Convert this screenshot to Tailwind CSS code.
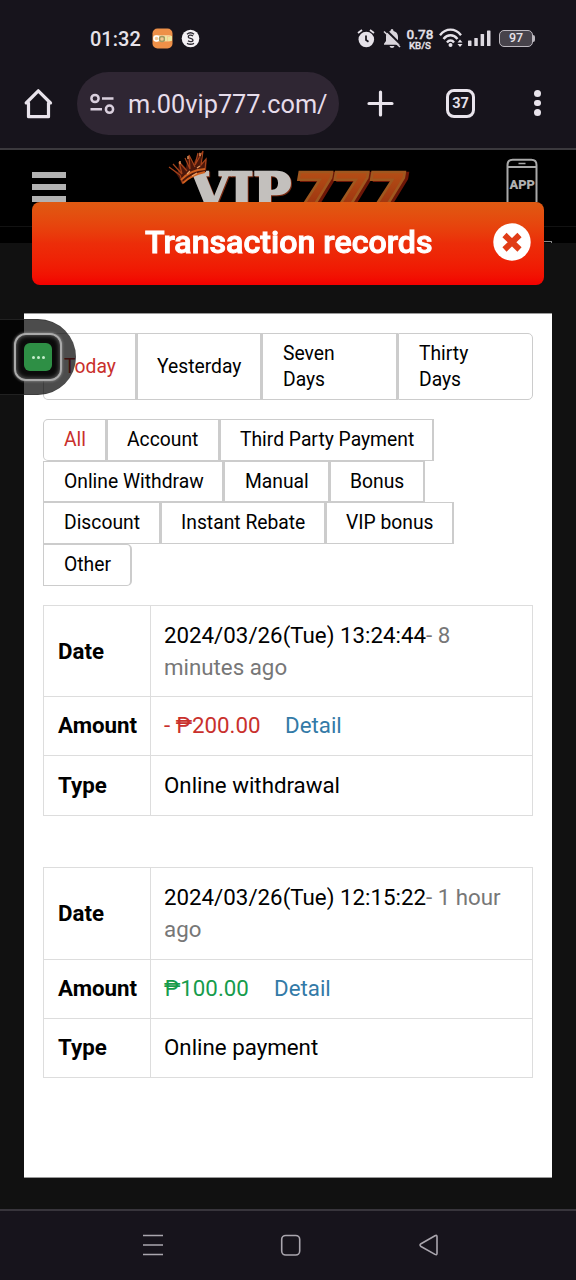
<!DOCTYPE html>
<html lang="en">
<head>
<meta charset="utf-8">
<title>Transaction records</title>
<script src="https://cdn.jsdelivr.net/npm/@tailwindcss/browser@4"></script>
</head>
<body class="w-[576px] h-[1280px] overflow-hidden bg-[#17141c] font-['Roboto','Noto_Sans',sans-serif] text-black">
<div class="relative flex h-[1280px] w-[576px] flex-col">

  <!-- Status bar -->
  <div class="flex h-[72px] items-start pt-[27px] pl-[90px] text-[#e6e2e9]">
    <span class="w-[62px] text-[20px] leading-6 font-medium whitespace-nowrap">01:32</span>
    <svg class="mt-[1px] h-[21px] w-[21px]" viewBox="0 0 21 21"><rect x=".5" y=".5" width="20" height="20" rx="5" fill="#ee9048"/><rect x="1" y="7" width="19" height="6.5" rx="3" fill="#f6c993"/><g fill="none" stroke-width="1.5"><circle cx="4.5" cy="10.5" r="2.5" stroke="#fff"/><circle cx="10" cy="11" r="2.5" stroke="#a09a63"/><path d="M14 8v5m3-4v4m2-5v5" stroke="#e9f0a4"/></g></svg>
    <svg class="mt-[2px] ml-[8px] h-[19px] w-[19px]" viewBox="0 0 19 19"><circle cx="9.5" cy="9.5" r="8.8" fill="#f4f1f5"/><path d="M6 5.2q3.5-3 7 0M6 14.3q3.500 2 7 0M12 7c-2-1.500-5-1-4.700 1 .2 1.700 4.700 1.200 4.700 3.200 0 1.800-3.300 1.800-5 .6" fill="none" stroke="#2b2830" stroke-width="1.400"/></svg>
    <svg class="mt-[1px] ml-[157px] h-[20px] w-[18px]" viewBox="0 0 18 20" fill="none" stroke="#e6e2e9"><circle cx="9.300" cy="11.500" r="7.800" fill="#e6e2e9" stroke="none"/><path d="M1 5l4-3M17 5l-4-3" stroke-width="1.800"/><path d="M9 7.500V12l2.500 1.800" stroke="#17141c" stroke-width="1.700"/></svg>
    <svg class="mt-[2px] ml-[8px] h-[20px] w-[18px]" viewBox="0 0 18 20"><path d="M9 0q1.500 0 1.500 2c3.300.8 4.500 3.500 4.500 6v4l2 2.800v1H1v-1L3 12V8c0-2.500 1.200-5.200 4.500-6C7.500 1 8 0 9 0zM6.500 17h5q-.5 2-2.500 2t-2.500-2z" fill="#d9d5dc"/><path d="M3 1l16 15.500" stroke="#17141c" stroke-width="2"/><path d="M1 2.500L17 18" stroke="#d9d5dc" stroke-width="1.600"/></svg>
    <div class="-mt-px ml-[5px] flex w-[28px] flex-col items-center font-medium whitespace-nowrap">
      <span class="text-[13.500px] leading-[16px] [-webkit-text-stroke:0.300px_#e6e2e9]">0.78</span>
      <span class="text-[9.800px] leading-[7px] [-webkit-text-stroke:0.300px_#e6e2e9]">KB/S</span>
    </div>
    <svg class="mt-[1px] ml-[5px] h-[20px] w-[24px]" viewBox="0 0 24 20" fill="none" stroke="#e6e2e9" stroke-width="2.400"><path d="M1 7.200C7-.2 16-.2 22 7.200M4.500 11c4-5 10-5 14 0M8 14.500c2-2.600 5-2.600 7 0"/><circle cx="11.500" cy="17" r="2" fill="#e6e2e9" stroke="none"/><path d="M21 11.500l2.500 3h-5zM21 19l2.500-3h-5z" fill="#e6e2e9" stroke="none"/></svg>
    <svg class="mt-[3px] ml-[5px] h-[17px] w-[24px]" viewBox="0 0 24 17" fill="#dedae1"><rect x="0" y="10.500" width="3.500" height="5.500" rx=".6"/><rect x="6.300" y="8" width="3.500" height="8" rx=".6"/><rect x="12.600" y="4" width="3.500" height="12" rx=".6"/><rect x="19" y=".5" width="3.500" height="15.500" rx=".6"/></svg>
    <div class="mt-[3px] ml-[7px] flex h-[17px] w-[34px] items-center justify-center rounded-[5px] border-[1.500px] border-[#bcb8bf] bg-[#47434b] text-[12.500px] font-medium">97</div>
    <div class="mt-[8px] h-[7px] w-[1.500px] rounded-r bg-[#bcb8bf]"></div>
  </div>

  <!-- Browser bar -->
  <div class="flex h-[76px] items-start text-[#e6e0e9]">
    <svg class="mt-[16px] ml-[23px] h-[32px] w-[31px]" viewBox="0 0 31 32" fill="none" stroke="#e9e4ec" stroke-width="3.200" stroke-linejoin="round"><path d="M15.300 2.800L27.500 15H25.500v13.700h-20V15H3.200z"/></svg>
    <div class="ml-[23px] flex h-[63px] w-[262px] items-center rounded-full bg-[#2f2633] pl-[12px]">
      <svg class="h-[24px] w-[26px]" viewBox="0 0 26 24" fill="none" stroke="#d9cfdd" stroke-width="2.500"><circle cx="6" cy="6.500" r="3.600"/><path d="M13 6.500H24.500M1.500 17.200h11.500"/><circle cx="20.500" cy="17.200" r="3.600"/></svg>
      <span class="mt-[2px] ml-[13px] w-[200px] overflow-hidden text-[25.300px] leading-8 whitespace-nowrap text-[#e6dcea]">m.00vip777.com/</span>
    </div>
    <svg class="mt-[18px] ml-[28px] h-[27px] w-[27px]" viewBox="0 0 27 27" stroke="#e9e4ec" stroke-width="3.200" stroke-linecap="round"><path d="M13.500 2v23M2 13.500h23"/></svg>
    <div class="mt-[17px] ml-[52px] flex h-[29px] w-[29px] items-center justify-center rounded-[8px] border-[3px] border-[#e9e4ec] text-[14.500px] font-bold">37</div>
    <div class="mt-[18px] ml-[59px] flex flex-col gap-[3px]"><i class="h-[6.500px] w-[6.500px] rounded-full bg-[#e9e4ec]"></i><i class="h-[6.500px] w-[6.500px] rounded-full bg-[#e9e4ec]"></i><i class="h-[6.500px] w-[6.500px] rounded-full bg-[#e9e4ec]"></i></div>
  </div>

  <!-- Web page -->
  <main class="flex h-[1061px] flex-col border-t-2 border-[#3b393d] bg-[#111]">
    <header class="flex h-[52px] items-start overflow-hidden bg-black">
      <div class="mt-[22px] ml-[32px] flex w-[34px] shrink-0 flex-col gap-[6px]"><i class="h-[6px] bg-[#b2b2b2]"></i><i class="h-[6px] bg-[#b2b2b2]"></i><i class="h-[6px] bg-[#b2b2b2]"></i></div>
      <svg class="ml-[102px] h-[52px] w-[244px] shrink-0" viewBox="0 0 244 52">
        <defs><linearGradient id="fire" x1="0" y1="0" x2="0" y2="1"><stop offset="0" stop-color="#bd5718"/><stop offset="1" stop-color="#8e240c"/></linearGradient></defs>
        <text class="drop-shadow-[1px_1px_0_#7a2a10]" x="23" y="59" font-family="DejaVu Serif" font-weight="700" font-size="50" textLength="100" lengthAdjust="spacingAndGlyphs" fill="#c3c0bd" stroke="#c3c0bd" stroke-width="2.600">VIP</text>
        <text class="drop-shadow-[3px_1px_0_#6d1607]" x="126" y="64.500" font-family="Roboto" font-style="italic" font-weight="900" font-size="60" textLength="109" lengthAdjust="spacingAndGlyphs" fill="url(#fire)" stroke="#a0571f" stroke-width="2.500">777</text>
        <path d="M1 17l9 5 1-11 7 7 2-13 5 9 7-13 2 12 5-4-1 13q-14 1-24 12-5-12-13-17z" fill="#4c170b"/>
        <path d="M1 17l11 8 3 9M5 14l9 10-3-12 8 9M17 8l5 11-1-14 6 12M30 3l-3 12 8-14-2 14 5-6-1 11" fill="none" stroke="#a5421a" stroke-width="1.200"/>
        <path d="M13 30q9-10 24-11M15 33q8-8 22-11" fill="none" stroke="#d0601f" stroke-width="1.800"/><path d="M19 24l3-3m7-3l3-2M12 11v3m8-8v3m12-6v3M24 26l5-3" stroke="#eaa066" stroke-width="1.300"/>
      </svg>
      <svg class="mt-[8px] ml-[93px] h-[44px] w-[34px] shrink-0" viewBox="0 0 34 44"><path d="M2.500 50V7q0-5.200 5.200-5.200h18.600q5.200 0 5.200 5.200v43M2.500 9h29" fill="none" stroke="#a9a9a9" stroke-width="2"/><path d="M13.500 5.500h7" stroke="#a9a9a9" stroke-width="1.500"/><text x="4.500" y="31" font-family="Roboto" font-weight="900" font-size="13.500" textLength="25.500" lengthAdjust="spacingAndGlyphs" fill="#b0b0b0">APP</text></svg>
    </header>
    <div class="flex h-[41px] flex-col bg-black pt-[24px]"><div class="h-px bg-[#121212]"></div></div>
    <div class="-mt-[41px] flex h-[83px] items-start">
      <div class="ml-[32px] flex h-[83px] w-[512px] items-center rounded-[8px] bg-linear-to-b from-[#df5a12] via-[#ec2d09] to-[#f30000] text-white">
        <h1 class="mb-[2px] ml-[113px] w-[290px] text-[30.500px] leading-10 font-medium whitespace-nowrap [-webkit-text-stroke:0.900px_white]"><span class="inline-block origin-left scale-x-[1.055]">Transaction records</span></h1>
        <svg class="mb-[3px] ml-[58px] h-[38px] w-[38px]" viewBox="0 0 38 38"><circle cx="19" cy="19" r="18.700" fill="#fff"/><path d="M11.500 12l15 14.500M26.500 12l-15 14.500" stroke="#e03c16" stroke-width="6"/></svg>
      </div>
      <div class="mt-[39px] h-[2px] w-[8px] border-t border-r border-[#888]"></div>
    </div>

    <section class="mt-[28px] ml-[24px] flex h-[865px] w-[528px] flex-col border-y border-[#999] bg-white px-[19px] pt-[19px]">
      <div class="flex h-[67px] w-[490px] text-[19.300px] leading-[26px]">
        <div class="flex w-[94px] items-center rounded-l-[5px] border border-b-[1.500px] border-r-2 border-[#ccc] pl-[20px] text-[#c9302c]">Today</div>
        <div class="flex w-[125px] items-center border border-r-2 border-[#ccc] pl-[19px]">Yesterday</div>
        <div class="flex w-[136px] items-center border border-r-2 border-[#ccc] pl-[20px]"><span>Seven<br>Days</span></div>
        <div class="flex w-[135px] items-center rounded-r-[5px] border border-[#ccc] pl-[20px]"><span>Thirty<br>Days</span></div>
      </div>
      <div class="mt-[19px] flex flex-col text-[19.300px] leading-[26px] whitespace-nowrap">
        <div class="flex h-[42px]">
          <div class="flex w-[64px] items-center rounded-tl-[5px] rounded-bl-[5px] border border-r-2 border-[#ccc] pl-[20px] text-[#c9302c]">All</div>
          <div class="flex w-[113px] items-center border border-r-2 border-[#ccc] pl-[19px]">Account</div>
          <div class="flex w-[214px] items-center border border-r-2 border-[#ccc] pl-[19px]">Third Party Payment</div>
        </div>
        <div class="flex h-[41px]">
          <div class="flex w-[181px] items-center border border-r-2 border-[#ccc] pl-[20px]">Online Withdraw</div>
          <div class="flex w-[106px] items-center border border-r-2 border-[#ccc] pl-[20px]">Manual</div>
          <div class="flex w-[95px] items-center border border-r-2 border-[#ccc] pl-[19px]">Bonus</div>
        </div>
        <div class="flex h-[42px]">
          <div class="flex w-[118px] items-center border border-r-2 border-[#ccc] pl-[20px]">Discount</div>
          <div class="flex w-[165px] items-center border border-r-2 border-[#ccc] pl-[19px]">Instant Rebate</div>
          <div class="flex w-[128px] items-center border border-r-2 border-[#ccc] pl-[19px]">VIP bonus</div>
        </div>
        <div class="flex h-[42px]">
          <div class="flex w-[89px] items-center rounded-r-[5px] border border-r-2 border-[#ccc] pl-[20px]">Other</div>
        </div>
      </div>

      <div class="mt-[19px] flex h-[211px] w-[490px] flex-col divide-y divide-[#ddd] border border-[#ddd] text-[22.300px] leading-[32px]">
        <div class="flex h-[91px] divide-x divide-[#ddd]"><div class="flex w-[107px] items-center pb-px pl-[14px] font-bold">Date</div><div class="flex flex-1 items-center pb-px pl-[13px] whitespace-nowrap"><p>2024/03/26(Tue) 13:24:44<span class="text-[#777]">- 8<br>minutes ago</span></p></div></div>
        <div class="flex h-[59px] divide-x divide-[#ddd]"><div class="flex w-[107px] items-center pb-[2px] pl-[14px] font-bold">Amount</div><div class="flex flex-1 items-center pb-[2px] pl-[13px] text-[#c9302c]"><span class="w-[121px] whitespace-nowrap">- ₱200.00</span><span class="text-[#337aa7]">Detail</span></div></div>
        <div class="flex h-[59px] divide-x divide-[#ddd]"><div class="flex w-[107px] items-center pb-[2px] pl-[14px] font-bold">Type</div><div class="flex flex-1 items-center pb-[2px] pl-[13px]">Online withdrawal</div></div>
      </div>

      <div class="mt-[51px] flex h-[211px] w-[490px] flex-col divide-y divide-[#ddd] border border-[#ddd] text-[22.300px] leading-[32px]">
        <div class="flex h-[92px] divide-x divide-[#ddd]"><div class="flex w-[107px] items-center pb-[2px] pl-[14px] font-bold">Date</div><div class="flex flex-1 items-center pb-[2px] pl-[13px] whitespace-nowrap"><p>2024/03/26(Tue) 12:15:22<span class="text-[#777]">- 1 hour<br>ago</span></p></div></div>
        <div class="flex h-[59px] divide-x divide-[#ddd]"><div class="flex w-[107px] items-center pb-[3px] pl-[14px] font-bold">Amount</div><div class="flex flex-1 items-center pb-[3px] pl-[13px] text-[#169c4c]"><span class="w-[110px] whitespace-nowrap">₱100.00</span><span class="text-[#337aa7]">Detail</span></div></div>
        <div class="flex h-[58px] divide-x divide-[#ddd]"><div class="flex w-[107px] items-center pb-[2px] pl-[14px] font-bold">Type</div><div class="flex flex-1 items-center pb-[2px] pl-[13px]">Online payment</div></div>
      </div>
    </section>
  </main>

  <!-- System navigation -->
  <nav class="flex h-[71px] items-start border-t-2 border-[#38353c]">
    <svg class="mt-[22px] ml-[142px] h-[24px] w-[22px]" viewBox="0 0 22 24" stroke="#aaa6ae" stroke-width="1.700"><path d="M1 2.500h20M1 12h20M1 21.500h20"/></svg>
    <svg class="mt-[22px] ml-[116px] h-[24px] w-[22px]" viewBox="0 0 22 24" fill="none" stroke="#aaa6ae" stroke-width="1.600"><rect x="1.700" y="2.500" width="18" height="19.500" rx="4"/></svg>
    <svg class="mt-[22px] ml-[116px] h-[24px] w-[22px]" viewBox="0 0 22 24" fill="none" stroke="#aaa6ae" stroke-width="1.600" stroke-linejoin="round"><path d="M17 2.700q2-1 2 1v16.500q0 2.300-2 1.200L3 13.500q-2-1.400 0-2.800z"/></svg>
  </nav>

  <!-- Floating assistant -->
  <div class="absolute top-[319px] left-0 flex h-[76px] w-[76px] items-center rounded-r-full border-y border-[#333]/60 bg-black/70 pl-[14px]">
    <div class="flex h-[48px] w-[48px] items-center justify-center rounded-[12px] border-2 border-[#aaa] bg-[#0b0b0b] shadow-[0_0_3px_#999,inset_0_0_5px_#777]">
      <div class="flex h-[28px] w-[28px] items-center justify-center gap-[2px] rounded-[6px] bg-[#2e8f45]"><i class="h-[3px] w-[3px] rounded-full bg-[#c5edcc]"></i><i class="h-[3px] w-[3px] rounded-full bg-[#c5edcc]"></i><i class="h-[3px] w-[3px] rounded-full bg-[#c5edcc]"></i></div>
    </div>
  </div>
</div>
</body>
</html>
